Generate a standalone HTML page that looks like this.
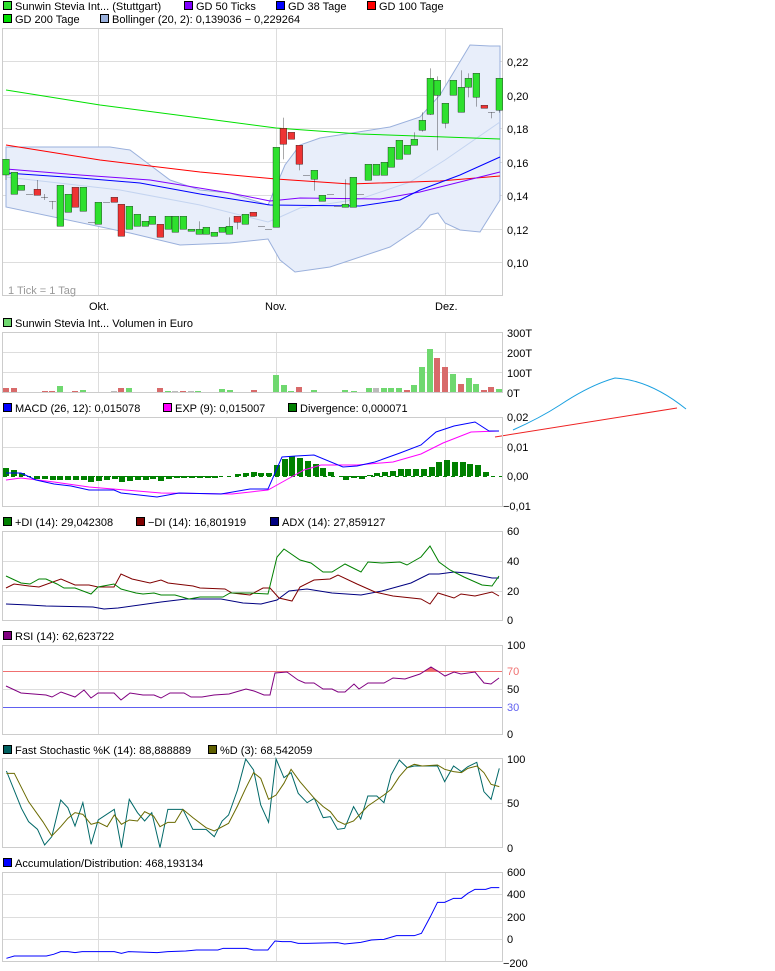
<!DOCTYPE html>
<html><head><meta charset="utf-8"><style>
html,body{margin:0;padding:0;background:#fff;width:775px;height:971px;overflow:hidden}
svg{display:block}
text{font-family:"Liberation Sans",sans-serif;font-size:11px;fill:#000}
.ln{fill:none;vector-effect:non-scaling-stroke;stroke-width:1}
.c{vector-effect:non-scaling-stroke;stroke:#000;stroke-width:1}
</style></head><body>
<svg width="775" height="971" viewBox="0 0 775 971" xmlns="http://www.w3.org/2000/svg">
<!-- legends -->
<g>
<rect x="3.5" y="1.5" width="8" height="8" fill="#2ee02e" stroke="#000"/><text x="15" y="10">Sunwin Stevia Int... (Stuttgart)</text>
<rect x="184.5" y="1.5" width="8" height="8" fill="#8000ff" stroke="#000"/><text x="196" y="10">GD 50 Ticks</text>
<rect x="276.5" y="1.5" width="8" height="8" fill="#0000ff" stroke="#000"/><text x="288" y="10">GD 38 Tage</text>
<rect x="367.5" y="1.5" width="8" height="8" fill="#ff0000" stroke="#000"/><text x="379" y="10">GD 100 Tage</text>
<rect x="3.5" y="14.5" width="8" height="8" fill="#00e000" stroke="#000"/><text x="15" y="23">GD 200 Tage</text>
<rect x="100.5" y="14.5" width="8" height="8" fill="#9ab0dc" stroke="#000"/><text x="112" y="23">Bollinger (20, 2): 0,139036 − 0,229264</text>
</g>
<!-- main panel -->
<rect x="2.5" y="28.5" width="500" height="267" fill="#fff" stroke="#ccc"/>
<g stroke="#ddd">
<line x1="3" x2="502" y1="61.5" y2="61.5"/><line x1="3" x2="502" y1="95.5" y2="95.5"/><line x1="3" x2="502" y1="128.5" y2="128.5"/><line x1="3" x2="502" y1="162.5" y2="162.5"/><line x1="3" x2="502" y1="195.5" y2="195.5"/><line x1="3" x2="502" y1="229.5" y2="229.5"/><line x1="3" x2="502" y1="262.5" y2="262.5"/>
<line x1="98.5" x2="98.5" y1="29" y2="295"/><line x1="276.5" x2="276.5" y1="29" y2="295"/><line x1="445.5" x2="445.5" y1="29" y2="295"/>
</g>
<text x="507" y="66">0,22</text><text x="507" y="100">0,20</text><text x="507" y="133">0,18</text><text x="507" y="167">0,16</text><text x="507" y="200">0,14</text><text x="507" y="234">0,12</text><text x="507" y="267">0,10</text>
<text x="89" y="310">Okt.</text><text x="265" y="310">Nov.</text><text x="435" y="310">Dez.</text>
<text x="8" y="294" style="fill:#999">1 Tick = 1 Tag</text>
<path d="M6,147 L110,147 130,150 150,165 170,180 200,190 230,193 268,205 285,165 300,145 320,138 390,127 420,117 440,95 470,45 490,46 500,46 L500,200 480,232 460,230 445,223 438,213 430,215 420,227 390,247 330,267 295,272 280,260 268,239 230,243 180,245 130,233 6,207 Z" fill="#e8eefa" stroke="#9ab0dc"/>
<polyline class="ln" stroke="#c4d4f0" points="6,177 120,190 200,205 268,222 280,217 300,208 360,199 410,182 445,160 500,122"/>
<polyline class="ln" stroke="#00e000" points="6,90 100,105 200,118 276,128 360,134 445,137 500,139"/>
<polyline class="ln" stroke="#ff0000" points="6,145 100,160 200,172 276,179 350,184 440,181 500,176"/>
<polyline class="ln" stroke="#8000ff" points="6,169 80,175 150,180 230,193 270,201 300,198 380,199 420,192 460,182 500,172"/>
<polyline class="ln" stroke="#0000ff" points="6,173 80,178 140,183 200,194 270,205 360,206 400,200 420,190 460,175 500,157"/>
<g transform="scale(0.33333)" fill="#2ee02e">
<g class="c">
<line x1="598" y1="664" x2="598" y2="703"/><line x1="688" y1="652" x2="688" y2="703"/><line x1="712" y1="649" x2="712" y2="688"/><line x1="850" y1="353" x2="850" y2="478"/><line x1="898" y1="436" x2="898" y2="511"/><line x1="943" y1="511" x2="943" y2="572"/><line x1="1036" y1="538" x2="1036" y2="622"/><line x1="1243" y1="397" x2="1243" y2="436"/><line x1="1267" y1="337" x2="1267" y2="395"/><line x1="1291" y1="205" x2="1291" y2="345"/><line x1="1312" y1="229" x2="1312" y2="451"/><line x1="1336" y1="310" x2="1336" y2="385"/><line x1="1384" y1="211" x2="1384" y2="337"/><line x1="1405" y1="220" x2="1405" y2="292"/><line x1="1429" y1="220" x2="1429" y2="320"/><line x1="1474" y1="337" x2="1474" y2="355"/><line x1="112" y1="540" x2="112" y2="586"/><line x1="157" y1="604" x2="157" y2="628"/><line x1="133" y1="582" x2="133" y2="600"/><line x1="18" y1="478" x2="18" y2="540"/><line x1="1360" y1="241" x2="1360" y2="286"/><line x1="1498" y1="235" x2="1498" y2="338"/>
<line x1="78" x2="99" y1="583" y2="583"/><line x1="123" x2="144" y1="592" y2="592"/><line x1="147" x2="168" y1="604" y2="604"/><line x1="264" x2="285" y1="667" y2="667"/><line x1="309" x2="330" y1="607" y2="607"/><line x1="774" x2="795" y1="679" y2="679"/><line x1="795" x2="816" y1="688" y2="688"/><line x1="909" x2="930" y1="526" y2="526"/><line x1="981" x2="1002" y1="583" y2="583"/><line x1="1002" x2="1023" y1="619" y2="619"/><line x1="1071" x2="1092" y1="583" y2="583"/><line x1="1464" x2="1485" y1="337" y2="337"/>
<rect x="8" y="478" width="20" height="47"/><rect x="33" y="517" width="20" height="66"/><rect x="54" y="556" width="20" height="15"/><rect x="102" y="568" width="20" height="18" fill="#e33"/><rect x="171" y="556" width="20" height="123"/><rect x="195" y="583" width="20" height="54"/><rect x="216" y="562" width="20" height="60" fill="#e33"/><rect x="240" y="562" width="20" height="72"/><rect x="285" y="607" width="20" height="66"/><rect x="333" y="592" width="20" height="15" fill="#e33"/><rect x="354" y="613" width="20" height="96" fill="#e33"/><rect x="378" y="619" width="20" height="69"/><rect x="402" y="643" width="20" height="36"/><rect x="426" y="664" width="20" height="15"/><rect x="447" y="649" width="20" height="24"/><rect x="471" y="673" width="20" height="39" fill="#e33"/><rect x="495" y="649" width="20" height="39"/><rect x="516" y="649" width="20" height="48"/><rect x="540" y="649" width="20" height="39"/><rect x="564" y="688" width="20" height="6"/><rect x="588" y="688" width="20" height="15"/><rect x="609" y="682" width="20" height="21"/><rect x="633" y="697" width="20" height="12"/><rect x="657" y="682" width="20" height="15"/><rect x="678" y="679" width="20" height="24"/><rect x="702" y="649" width="20" height="18" fill="#e33"/><rect x="726" y="643" width="20" height="30"/><rect x="750" y="637" width="20" height="12" fill="#e33"/><rect x="819" y="442" width="20" height="240"/><rect x="840" y="385" width="20" height="48" fill="#e33"/><rect x="864" y="397" width="20" height="21" fill="#e33"/><rect x="888" y="436" width="20" height="57" fill="#e33"/><rect x="933" y="511" width="20" height="27"/><rect x="957" y="586" width="20" height="18"/><rect x="1026" y="613" width="20" height="9"/><rect x="1050" y="532" width="20" height="90"/><rect x="1095" y="493" width="20" height="48"/><rect x="1119" y="493" width="20" height="33"/><rect x="1143" y="487" width="20" height="39"/><rect x="1164" y="442" width="20" height="60"/><rect x="1188" y="421" width="20" height="57"/><rect x="1212" y="436" width="20" height="27"/><rect x="1233" y="418" width="20" height="18"/><rect x="1257" y="361" width="20" height="30"/><rect x="1281" y="235" width="20" height="108"/><rect x="1302" y="241" width="20" height="45"/><rect x="1326" y="310" width="20" height="60"/><rect x="1350" y="241" width="20" height="45"/><rect x="1374" y="262" width="20" height="75"/><rect x="1395" y="235" width="20" height="27"/><rect x="1419" y="220" width="20" height="72"/><rect x="1443" y="316" width="20" height="9" fill="#e33"/><rect x="1488" y="235" width="20" height="96"/>
</g></g>

<!-- volume -->
<rect x="3.5" y="318.5" width="8" height="8" fill="#6fd86f" stroke="#000"/><text x="15" y="327">Sunwin Stevia Int... Volumen in Euro</text>
<rect x="2.5" y="332.5" width="500" height="60" fill="#fff" stroke="#ccc"/>
<g stroke="#ddd"><line x1="3" x2="502" y1="352.5" y2="352.5"/><line x1="3" x2="502" y1="372.5" y2="372.5"/><line x1="98.5" x2="98.5" y1="333" y2="392"/><line x1="276.5" x2="276.5" y1="333" y2="392"/><line x1="445.5" x2="445.5" y1="333" y2="392"/></g>
<text x="507" y="337">300T</text><text x="507" y="357">200T</text><text x="507" y="377">100T</text><text x="507" y="397">0T</text>
<g>
<rect x="3" y="388" width="6" height="4" fill="#d86a6a"/><rect x="11" y="388" width="6" height="4" fill="#d86a6a"/><rect x="42" y="391" width="6" height="1" fill="#d86a6a"/><rect x="49" y="391" width="6" height="1" fill="#d86a6a"/><rect x="57" y="386" width="6" height="6" fill="#6fd86f"/><rect x="72" y="391" width="6" height="1" fill="#d86a6a"/><rect x="80" y="390" width="6" height="2" fill="#6fd86f"/><rect x="111" y="391" width="6" height="1" fill="#bbb"/><rect x="118" y="388" width="6" height="4" fill="#d86a6a"/><rect x="126" y="388" width="6" height="4" fill="#6fd86f"/><rect x="157" y="388" width="6" height="4" fill="#d86a6a"/><rect x="165" y="391" width="6" height="1" fill="#6fd86f"/><rect x="172" y="391" width="6" height="1" fill="#bbb"/><rect x="180" y="391" width="6" height="1" fill="#d86a6a"/><rect x="188" y="391" width="6" height="1" fill="#bbb"/><rect x="195" y="391" width="6" height="1" fill="#6fd86f"/><rect x="219" y="389" width="6" height="3" fill="#6fd86f"/><rect x="227" y="390" width="6" height="2" fill="#6fd86f"/><rect x="251" y="390" width="6" height="2" fill="#d86a6a"/><rect x="273" y="375" width="6" height="17" fill="#6fd86f"/><rect x="281" y="385" width="6" height="7" fill="#6fd86f"/><rect x="288" y="391" width="6" height="1" fill="#6fd86f"/><rect x="296" y="387" width="6" height="5" fill="#d86a6a"/><rect x="311" y="390" width="6" height="2" fill="#6fd86f"/><rect x="342" y="390" width="6" height="2" fill="#6fd86f"/><rect x="351" y="391" width="6" height="1" fill="#6fd86f"/><rect x="366" y="388" width="6" height="4" fill="#6fd86f"/><rect x="373" y="388" width="6" height="4" fill="#bbb"/><rect x="381" y="388" width="6" height="4" fill="#6fd86f"/><rect x="388" y="388" width="6" height="4" fill="#6fd86f"/><rect x="396" y="388" width="6" height="4" fill="#6fd86f"/><rect x="404" y="390" width="6" height="2" fill="#d86a6a"/><rect x="411" y="385" width="6" height="7" fill="#6fd86f"/><rect x="419" y="367" width="6" height="25" fill="#6fd86f"/><rect x="427" y="349" width="6" height="43" fill="#6fd86f"/><rect x="434" y="358" width="6" height="34" fill="#d86a6a"/><rect x="442" y="367" width="6" height="25" fill="#d86a6a"/><rect x="450" y="374" width="6" height="18" fill="#6fd86f"/><rect x="458" y="384" width="6" height="8" fill="#d86a6a"/><rect x="466" y="378" width="6" height="14" fill="#6fd86f"/><rect x="473" y="384" width="6" height="8" fill="#6fd86f"/><rect x="481" y="390" width="6" height="2" fill="#d86a6a"/><rect x="488" y="387" width="6" height="5" fill="#d86a6a"/><rect x="496" y="389" width="6" height="3" fill="#6fd86f"/>
</g>
<!-- stray lines -->
<path d="M513,430 Q540,418 560,405 Q590,385 615,378 Q650,380 686,409" class="ln" stroke="#1aa0e0"/>
<line x1="495" y1="437" x2="677" y2="408" stroke="#ee2222"/>

<!-- MACD -->
<rect x="3.5" y="403.5" width="8" height="8" fill="#0000ff" stroke="#000"/><text x="15" y="412">MACD (26, 12): 0,015078</text>
<rect x="163.5" y="403.5" width="8" height="8" fill="#ff00ff" stroke="#000"/><text x="175" y="412">EXP (9): 0,015007</text>
<rect x="288.5" y="403.5" width="8" height="8" fill="#008000" stroke="#000"/><text x="300" y="412">Divergence: 0,000071</text>
<rect x="2.5" y="417.5" width="500" height="89" fill="none" stroke="#ccc"/>
<g stroke="#ddd"><line x1="3" x2="502" y1="447.5" y2="447.5"/><line x1="98.5" x2="98.5" y1="418" y2="506"/><line x1="276.5" x2="276.5" y1="418" y2="506"/><line x1="445.5" x2="445.5" y1="418" y2="506"/></g>
<text x="507" y="421">0,02</text><text x="507" y="451">0,01</text><text x="507" y="480">0,00</text><text x="503" y="510">−0,01</text>
<line x1="3" x2="502" y1="476.5" y2="476.5" stroke="#008000" stroke-dasharray="4,4"/>
<g fill="#008000">
<rect x="3" y="468" width="6" height="8"/><rect x="11" y="470" width="6" height="6"/><rect x="19" y="473" width="6" height="3"/>
<rect x="34" y="476" width="6" height="3"/><rect x="42" y="476" width="6" height="3"/><rect x="50" y="476" width="6" height="4"/><rect x="57" y="476" width="6" height="4"/><rect x="65" y="476" width="6" height="4"/><rect x="73" y="476" width="6" height="4"/><rect x="81" y="476" width="6" height="4"/><rect x="88" y="476" width="6" height="6"/><rect x="96" y="476" width="6" height="5"/><rect x="104" y="476" width="6" height="4"/><rect x="112" y="476" width="6" height="3"/><rect x="119" y="476" width="6" height="6"/><rect x="127" y="476" width="6" height="5"/><rect x="135" y="476" width="6" height="4"/><rect x="143" y="476" width="6" height="4"/><rect x="150" y="476" width="6" height="3"/><rect x="158" y="476" width="6" height="5"/><rect x="166" y="476" width="6" height="3"/><rect x="174" y="476" width="6" height="2"/><rect x="181" y="476" width="6" height="2"/><rect x="189" y="476" width="6" height="2"/><rect x="197" y="476" width="6" height="2"/><rect x="205" y="476" width="6" height="2"/><rect x="212" y="476" width="6" height="2"/>
<rect x="235" y="474" width="6" height="2"/><rect x="243" y="473" width="6" height="3"/><rect x="251" y="472" width="6" height="4"/><rect x="258" y="473" width="6" height="3"/><rect x="266" y="473" width="6" height="3"/>
<rect x="274" y="465" width="6" height="11"/><rect x="282" y="459" width="6" height="17"/><rect x="289" y="456" width="6" height="20"/><rect x="297" y="458" width="6" height="18"/><rect x="305" y="461" width="6" height="15"/><rect x="313" y="464" width="6" height="12"/><rect x="320" y="468" width="6" height="8"/><rect x="328" y="472" width="6" height="4"/>
<rect x="343" y="476" width="6" height="4"/><rect x="351" y="476" width="6" height="2"/><rect x="359" y="476" width="6" height="3"/><rect x="367" y="475" width="6" height="1"/><rect x="374" y="473" width="6" height="3"/><rect x="382" y="472" width="6" height="4"/><rect x="390" y="471" width="6" height="5"/><rect x="398" y="469" width="6" height="7"/><rect x="405" y="469" width="6" height="7"/><rect x="413" y="469" width="6" height="7"/><rect x="421" y="469" width="6" height="7"/><rect x="429" y="467" width="6" height="9"/><rect x="436" y="462" width="6" height="14"/><rect x="444" y="460" width="6" height="16"/><rect x="452" y="462" width="6" height="14"/><rect x="460" y="462" width="6" height="14"/><rect x="467" y="464" width="6" height="12"/><rect x="475" y="465" width="6" height="11"/><rect x="483" y="472" width="6" height="4"/>
</g>
<polyline class="ln" stroke="#ff00ff" points="6,480 21,478 54,482 89,487 125,490 161,493 232,494 268,490 286,480 304,470 321,465 357,465 393,462 421,454 443,443 471,432 499,431"/>
<polyline class="ln" stroke="#0000ff" points="6,473 21,473 36,480 54,484 71,486 89,490 114,490 121,493 157,497 179,493 221,494 250,489 268,489 282,457 296,456 314,455 343,467 357,466 375,462 400,453 421,445 436,432 454,426 475,422 489,431 499,431"/>

<!-- DI -->
<rect x="3.5" y="517.5" width="8" height="8" fill="#008000" stroke="#000"/><text x="15" y="526">+DI (14): 29,042308</text>
<rect x="136.5" y="517.5" width="8" height="8" fill="#800000" stroke="#000"/><text x="148" y="526">−DI (14): 16,801919</text>
<rect x="270.5" y="517.5" width="8" height="8" fill="#000080" stroke="#000"/><text x="282" y="526">ADX (14): 27,859127</text>
<rect x="2.5" y="531.5" width="500" height="89" fill="none" stroke="#ccc"/>
<g stroke="#ddd"><line x1="3" x2="502" y1="561.5" y2="561.5"/><line x1="3" x2="502" y1="591.5" y2="591.5"/><line x1="98.5" x2="98.5" y1="532" y2="620"/><line x1="276.5" x2="276.5" y1="532" y2="620"/><line x1="445.5" x2="445.5" y1="532" y2="620"/></g>
<text x="507" y="535">60</text><text x="507" y="565">40</text><text x="507" y="595">20</text><text x="507" y="624">0</text>
<polyline class="ln" stroke="#000080" points="6,604 29,605 46,606 93,607 104,609 118,608 161,602 186,599 221,599 243,603 261,604 277,600 289,591 307,589 332,593 361,595 382,591 411,583 429,574 439,574 454,572 468,573 492,578 499,578"/>
<polyline class="ln" stroke="#800000" points="6,588 14,584 29,586 39,587 61,579 75,585 89,585 98,587 114,587 121,574 132,579 150,583 161,580 168,583 193,586 200,588 225,589 232,593 250,595 263,588 270,588 279,598 292,601 300,587 314,580 330,579 338,575 357,584 375,592 393,596 421,599 430,604 438,593 454,598 461,594 475,596 492,592 499,596"/>
<polyline class="ln" stroke="#008000" points="6,576 21,583 30,584 39,579 46,579 57,584 64,588 75,588 91,594 98,587 114,584 121,589 136,593 143,594 154,593 161,595 175,595 189,599 200,597 223,597 230,593 250,593 268,594 277,557 284,549 300,560 311,563 323,572 332,572 345,564 361,572 368,562 382,563 400,562 407,565 421,557 430,546 439,562 450,570 464,577 482,585 492,586 499,576"/>

<!-- RSI -->
<rect x="3.5" y="631.5" width="8" height="8" fill="#800080" stroke="#000"/><text x="15" y="640">RSI (14): 62,623722</text>
<rect x="2.5" y="645.5" width="500" height="89" fill="none" stroke="#ccc"/>
<g stroke="#ddd"><line x1="3" x2="502" y1="689.5" y2="689.5"/><line x1="98.5" x2="98.5" y1="646" y2="734"/><line x1="276.5" x2="276.5" y1="646" y2="734"/><line x1="445.5" x2="445.5" y1="646" y2="734"/></g>
<line x1="3" x2="502" y1="671.5" y2="671.5" stroke="#f07070"/>
<line x1="3" x2="502" y1="707.5" y2="707.5" stroke="#6060f0"/>
<path d="M424,671 L431,667 439,671 Z" fill="#f07070"/>
<text x="507" y="649">100</text><text x="507" y="675" style="fill:#f07070">70</text><text x="507" y="693">50</text><text x="507" y="711" style="fill:#6060f0">30</text><text x="507" y="738">0</text>
<polyline class="ln" stroke="#800080" points="6,686 21,693 46,695 52,697 61,692 75,697 84,690 91,698 98,693 114,693 121,700 130,693 143,695 154,695 161,698 170,693 184,693 191,697 202,697 214,695 229,694 246,689 254,691 264,695 270,695 275,673 287,672 298,680 305,683 314,683 323,689 332,689 338,692 345,692 354,684 359,689 368,683 384,683 393,678 405,679 420,674 431,667 439,672 445,676 454,672 461,674 475,672 484,683 491,684 499,678"/>

<!-- Stoch -->
<rect x="3.5" y="745.5" width="8" height="8" fill="#006060" stroke="#000"/><text x="15" y="754">Fast Stochastic %K (14): 88,888889</text>
<rect x="208.5" y="745.5" width="8" height="8" fill="#606000" stroke="#000"/><text x="220" y="754">%D (3): 68,542059</text>
<rect x="2.5" y="758.5" width="500" height="89" fill="none" stroke="#ccc"/>
<g stroke="#ddd"><line x1="3" x2="502" y1="803.5" y2="803.5"/><line x1="98.5" x2="98.5" y1="759" y2="847"/><line x1="276.5" x2="276.5" y1="759" y2="847"/><line x1="445.5" x2="445.5" y1="759" y2="847"/></g>
<text x="507" y="763">100</text><text x="507" y="807">50</text><text x="507" y="852">0</text>
<g transform="translate(0,735) scale(0.35714,0.33333)">
<polyline class="ln" stroke="#006868" points="18,108 60,220 80,260 105,283 125,330 145,305 170,195 190,218 210,273 232,203 255,328 275,255 320,223 340,338 362,193 385,233 405,258 425,233 448,338 470,223 512,223 540,283 577,283 600,305 622,258 640,240 665,165 688,72 710,105 730,210 752,262 773,72 795,128 815,113 835,175 860,203 880,190 905,248 925,245 945,283 965,280 990,215 1010,252 1030,183 1055,183 1075,203 1095,120 1118,75 1140,98 1160,93 1182,93 1225,93 1245,140 1270,93 1292,110 1310,95 1335,82 1355,170 1375,193 1398,100"/>
<polyline class="ln" stroke="#6a6a00" points="18,115 40,115 80,200 120,260 145,303 170,275 190,250 210,233 232,238 255,268 275,262 300,275 320,240 340,268 362,255 385,258 405,230 430,243 448,275 470,262 490,262 512,223 540,248 577,278 600,288 640,265 665,213 688,160 710,113 730,130 752,193 773,180 795,145 815,103 840,140 880,190 905,215 925,230 945,258 965,268 990,258 1030,213 1075,180 1095,163 1118,125 1140,98 1160,88 1182,93 1225,90 1245,103 1270,110 1292,113 1310,100 1335,93 1355,113 1375,148 1398,155"/>
</g>

<!-- A/D -->
<rect x="3.5" y="858.5" width="8" height="8" fill="#0000ff" stroke="#000"/><text x="15" y="867">Accumulation/Distribution: 468,193134</text>
<rect x="2.5" y="872.5" width="500" height="89" fill="none" stroke="#ccc"/>
<g stroke="#ddd"><line x1="3" x2="502" y1="894.5" y2="894.5"/><line x1="3" x2="502" y1="917.5" y2="917.5"/><line x1="3" x2="502" y1="939.5" y2="939.5"/><line x1="98.5" x2="98.5" y1="873" y2="961"/><line x1="276.5" x2="276.5" y1="873" y2="961"/><line x1="445.5" x2="445.5" y1="873" y2="961"/></g>
<text x="507" y="876">600</text><text x="507" y="898">400</text><text x="507" y="921">200</text><text x="507" y="943">0</text><text x="503" y="967">−200</text>
<g transform="translate(0,735) scale(0.35714,0.33333)">
<polyline class="ln" stroke="#0000ff" points="18,670 40,663 130,663 150,658 170,650 190,650 210,653 230,650 320,650 340,655 360,650 440,653 470,650 520,648 550,645 610,645 625,640 690,640 710,645 750,645 770,618 790,620 815,620 835,625 860,625 945,623 965,627 1010,622 1040,615 1075,613 1110,602 1160,602 1180,595 1205,545 1225,502 1245,502 1270,490 1292,490 1310,475 1330,463 1360,463 1375,458 1398,458"/>
</g>
</svg>
</body></html>
